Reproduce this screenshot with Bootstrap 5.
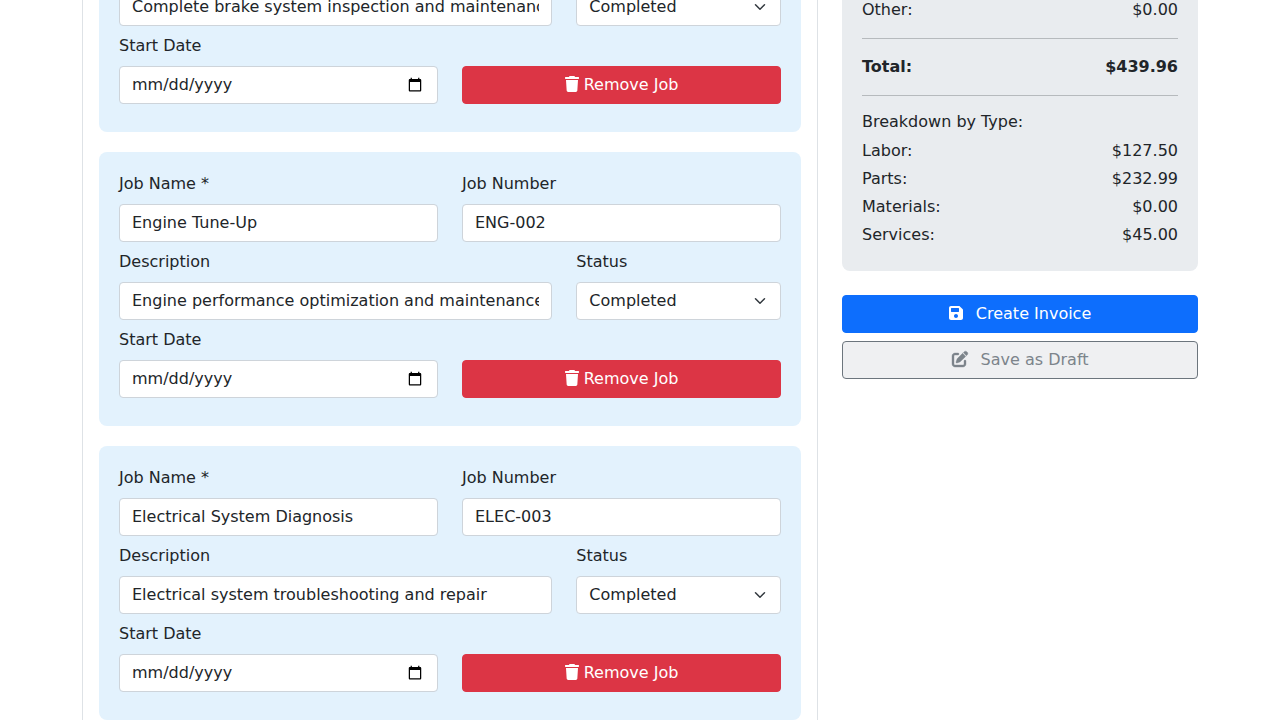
<!DOCTYPE html>
<html lang="en">
<head>
<meta charset="utf-8">
<meta name="viewport" content="width=device-width, initial-scale=1">
<title>Create Invoice</title>
<link href="https://cdn.jsdelivr.net/npm/bootstrap@5.3.0/dist/css/bootstrap.min.css" rel="stylesheet">
<style>
  body { font-family: "DejaVu Sans", sans-serif; height: 720px; overflow: hidden; }
  .invoice-page { max-width: 1140px; }
  .jobs-panel { margin-top: -32px; padding: 0 16px; border: solid #dee2e6; border-width: 0 1px; }
  .job-box { background: #e3f2fd; border-radius: 8px; padding: 20px; margin-bottom: 20px; }
  .job-box .form-control, .job-box .form-select { border-color: #ced4da; border-radius: 4px; }
  .invoice-page .btn { border-radius: 4px; }
  .summary-box { background: #e9ecef; border-radius: 8px; padding: 20px; margin-top: -22px; margin-bottom: 24px; }
  .icon { height: 1em; vertical-align: -0.125em; fill: currentColor; overflow: visible; }
  .icon-edit { stroke: currentColor; stroke-width: 12; }
  .btn-draft { --bs-btn-color: #7c848b; --bs-btn-bg: #eff0f2; --bs-btn-border-color: #6c757d; }
</style>
</head>
<body>
<svg class="d-none" aria-hidden="true">
  <symbol id="trash" viewBox="0 0 448 512"><path d="M53.21 467c1.562 24.84 23.02 45 47.9 45h245.8c24.88 0 46.33-20.16 47.9-45L416 128H32L53.21 467zM432 32H320l-11.58-23.16c-2.709-5.42-8.25-8.844-14.31-8.844H153.9c-6.061 0-11.6 3.424-14.31 8.844L128 32H16c-8.836 0-16 7.162-16 16V80c0 8.836 7.164 16 16 16h416c8.838 0 16-7.164 16-16V48C448 39.16 440.8 32 432 32z"/></symbol>
</svg>
<div class="container invoice-page">
  <div class="row">
    <div class="col-8">
      <div class="jobs-panel">
        <div class="job-box">
          <div class="row">
            <div class="col-8 mb-2"><input class="form-control" type="text" aria-label="Description" value="Complete brake system inspection and maintenance"></div>
            <div class="col-4 mb-2"><select class="form-select" aria-label="Status"><option>Completed</option></select></div>
            <div class="col-6 mb-2"><label class="form-label" for="d1">Start Date</label><input class="form-control" type="date" id="d1"></div>
            <div class="col-6 mb-2 d-flex align-items-end"><button class="btn btn-danger w-100" type="button"><svg class="icon" width="14" height="16"><use href="#trash"/></svg> Remove Job</button></div>
          </div>
        </div>
        <div class="job-box">
          <div class="row">
            <div class="col-6 mb-2"><label class="form-label" for="n2">Job Name *</label><input class="form-control" type="text" id="n2" value="Engine Tune-Up"></div>
            <div class="col-6 mb-2"><label class="form-label" for="j2">Job Number</label><input class="form-control" type="text" id="j2" value="ENG-002"></div>
            <div class="col-8 mb-2"><label class="form-label" for="t2">Description</label><input class="form-control" type="text" id="t2" value="Engine performance optimization and maintenance"></div>
            <div class="col-4 mb-2"><label class="form-label" for="s2">Status</label><select class="form-select" id="s2"><option>Completed</option></select></div>
            <div class="col-6 mb-2"><label class="form-label" for="d2">Start Date</label><input class="form-control" type="date" id="d2"></div>
            <div class="col-6 mb-2 d-flex align-items-end"><button class="btn btn-danger w-100" type="button"><svg class="icon" width="14" height="16"><use href="#trash"/></svg> Remove Job</button></div>
          </div>
        </div>
        <div class="job-box">
          <div class="row">
            <div class="col-6 mb-2"><label class="form-label" for="n3">Job Name *</label><input class="form-control" type="text" id="n3" value="Electrical System Diagnosis"></div>
            <div class="col-6 mb-2"><label class="form-label" for="j3">Job Number</label><input class="form-control" type="text" id="j3" value="ELEC-003"></div>
            <div class="col-8 mb-2"><label class="form-label" for="t3">Description</label><input class="form-control" type="text" id="t3" value="Electrical system troubleshooting and repair"></div>
            <div class="col-4 mb-2"><label class="form-label" for="s3">Status</label><select class="form-select" id="s3"><option>Completed</option></select></div>
            <div class="col-6 mb-2"><label class="form-label" for="d3">Start Date</label><input class="form-control" type="date" id="d3"></div>
            <div class="col-6 mb-2 d-flex align-items-end"><button class="btn btn-danger w-100" type="button"><svg class="icon" width="14" height="16"><use href="#trash"/></svg> Remove Job</button></div>
          </div>
        </div>
      </div>
    </div>
    <div class="col-4">
      <div class="summary-box">
        <div class="d-flex justify-content-between mb-1"><span>Other:</span><span>$0.00</span></div>
        <hr>
        <div class="d-flex justify-content-between fw-bold"><span>Total:</span><span>$439.96</span></div>
        <hr>
        <h6>Breakdown by Type:</h6>
        <div class="d-flex justify-content-between mb-1"><span>Labor:</span><span>$127.50</span></div>
        <div class="d-flex justify-content-between mb-1"><span>Parts:</span><span>$232.99</span></div>
        <div class="d-flex justify-content-between mb-1"><span>Materials:</span><span>$0.00</span></div>
        <div class="d-flex justify-content-between mb-1"><span>Services:</span><span>$45.00</span></div>
      </div>
      <div class="d-grid gap-2">
        <button class="btn btn-primary" type="button"><svg class="icon me-2" width="14" height="16" viewBox="0 0 448 512"><path fill-rule="evenodd" d="M433.1 129.1l-83.9-83.9C342.3 38.32 327.1 32 316.1 32H64C28.65 32 0 60.65 0 96v320c0 35.35 28.65 64 64 64h320c35.35 0 64-28.65 64-64V163.9C448 152.9 441.7 137.7 433.1 129.1zM224 416c-35.34 0-64-28.66-64-64s28.66-64 64-64s64 28.66 64 64S259.3 416 224 416zM320 208C320 216.8 312.8 224 304 224h-224C71.16 224 64 216.8 64 208v-96C64 103.2 71.16 96 80 96h224C312.8 96 320 103.2 320 112V208z"/></svg> Create Invoice</button>
        <button class="btn btn-draft" type="button"><svg class="icon icon-edit me-2" width="16" height="16" viewBox="0 0 512 512"><path d="M471.6 21.7c-21.9-21.9-57.3-21.9-79.2 0L362.3 51.7l97.9 97.9 30.1-30.1c21.9-21.9 21.9-57.3 0-79.2L471.6 21.7zm-299.2 220c-6.1 6.1-10.8 13.6-13.5 21.9l-29.6 88.8c-2.9 8.6-.6 18.1 5.8 24.6s15.9 8.7 24.6 5.8l88.8-29.6c8.2-2.7 15.7-7.4 21.9-13.5L437.7 172.3 339.7 74.3 172.4 241.7zM96 64C43 64 0 107 0 160V416c0 53 43 96 96 96H352c53 0 96-43 96-96V320c0-17.7-14.3-32-32-32s-32 14.3-32 32v96c0 17.7-14.3 32-32 32H96c-17.7 0-32-14.3-32-32V160c0-17.7 14.3-32 32-32h96c17.7 0 32-14.3 32-32s-14.3-32-32-32H96z"/></svg> Save as Draft</button>
      </div>
    </div>
  </div>
</div>
<script src="https://cdn.jsdelivr.net/npm/bootstrap@5.3.0/dist/js/bootstrap.bundle.min.js"></script>
</body>
</html>
